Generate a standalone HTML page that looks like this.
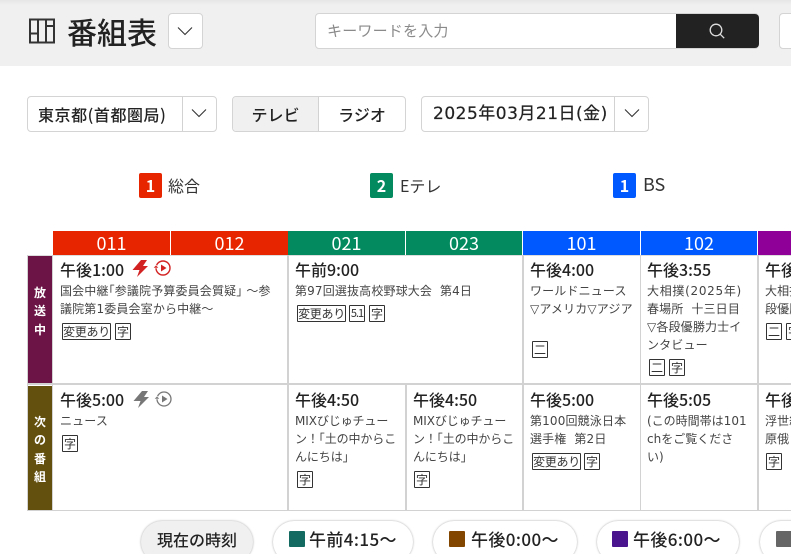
<!DOCTYPE html>
<html lang="ja"><head><meta charset="utf-8"><title>番組表</title>
<style>
*{box-sizing:border-box;margin:0;padding:0}
html,body{width:791px;height:554px;overflow:hidden;background:#fff}
body{position:relative;font-family:"Noto Sans CJK JP","Liberation Sans",sans-serif;color:#222}
.a{position:absolute;white-space:nowrap}
.box{position:absolute;background:#fff;border:1px solid #d4d4d4;border-radius:4px}
.ln{position:absolute;background:#d2d2d2}
.hd{position:absolute;top:231px;height:24px;color:#fff;font-size:18px;line-height:24px;text-align:center}
.t{position:absolute;white-space:nowrap;font-size:16px;font-weight:500;line-height:20px;color:#222}
.d{position:absolute;white-space:nowrap;font-family:"DejaVu Sans","Noto Sans CJK JP",sans-serif;font-size:12px;line-height:18px;color:#444;letter-spacing:.15px}
.g{position:absolute;height:17px;border:1px solid #333;border-radius:1px;font-family:"Noto Sans CJK JP",sans-serif;font-size:12px;line-height:15px;text-align:center;color:#333;background:#fff;white-space:nowrap;overflow:hidden}
.w{width:16px}.l{width:49px;letter-spacing:-.3px}
.side{position:absolute;left:28px;width:24px;color:#fff;font-size:12px;font-weight:700;text-align:center;line-height:18.300px}
.pill{position:absolute;top:521px;height:42px;border-radius:21px;background:#fff;box-shadow:0 0 2px rgba(0,0,0,.35)}
.sq{position:absolute;top:531px;width:16px;height:16px;border-radius:1px}
.pt{position:absolute;top:529px;font-size:17px;line-height:20px;font-weight:500;white-space:nowrap;color:#222;letter-spacing:.4px}
.b{position:absolute;top:173px;width:23px;height:25px;border-radius:2px;color:#fff;font-size:16px;font-weight:700;line-height:25px;text-align:center}
.c{position:absolute;top:174px;font-size:16px;line-height:22px;color:#333}
</style></head><body>
<div class="a" style="left:0;top:0;width:791px;height:66px;background:linear-gradient(#e6e6e6,#f0f0f0 5px)"></div>
<svg class="a" style="left:28px;top:18px" width="28" height="26" viewBox="0 0 28 26" fill="none" stroke="#333" stroke-width="2"><rect x="2" y="1.500" width="24" height="23"/><path d="M10 1.500v23M18 1.500v23M2 15.500h8M18 8h8"/></svg>
<div class="a" style="left:67px;top:10px;font-size:30px;font-weight:500;line-height:42px;color:#222">番組表</div>
<div class="box" style="left:168px;top:13px;width:35px;height:36px"></div>
<svg class="a" style="left:176px;top:26px" width="18" height="10" fill="none" stroke="#333" stroke-width="1.100"><path d="M2 1.500l7 7 7-7"/></svg>
<div class="box" style="left:315px;top:13px;width:444px;height:36px"></div>
<div class="a" style="left:327px;top:21px;font-size:15px;line-height:20px;color:#8a8a8a;letter-spacing:.2px">キーワードを入力</div>
<div class="a" style="left:676px;top:14px;width:83px;height:34px;background:#222;border-radius:0 4px 4px 0"></div>
<svg class="a" style="left:708px;top:22px" width="18" height="18" fill="none" stroke="#ddd" stroke-width="1.300"><circle cx="8" cy="8" r="5.800"/><path d="M12.200 12.200l4 4"/></svg>
<div class="box" style="left:779px;top:13px;width:30px;height:36px"></div>

<div class="box" style="left:27px;top:96px;width:190px;height:36px"></div>
<div class="ln" style="left:182px;top:97px;width:1px;height:34px"></div>
<div class="a" style="left:38px;top:103px;font-size:16px;font-weight:500;line-height:22px;letter-spacing:.55px">東京都(首都圏局)</div>
<svg class="a" style="left:190px;top:108px" width="18" height="10" fill="none" stroke="#333" stroke-width="1.100"><path d="M2 1.500l7 7 7-7"/></svg>
<div class="box" style="left:232px;top:96px;width:174px;height:36px"></div>
<div class="a" style="left:233px;top:97px;width:85px;height:34px;background:#f0f0f0;border-radius:3px 0 0 3px"></div>
<div class="ln" style="left:318px;top:97px;width:1px;height:34px"></div>
<div class="a" style="left:233px;top:103px;width:85px;text-align:center;font-size:16px;font-weight:500;line-height:22px">テレビ</div>
<div class="a" style="left:319px;top:103px;width:86px;text-align:center;font-size:16px;font-weight:500;line-height:22px">ラジオ</div>
<div class="box" style="left:421px;top:96px;width:228px;height:36px"></div>
<div class="ln" style="left:614px;top:97px;width:1px;height:34px"></div>
<div class="a" style="left:433px;top:103px;font-family:'DejaVu Sans','Noto Sans CJK JP',sans-serif;font-size:17px;font-weight:400;line-height:22px;letter-spacing:.5px;-webkit-text-stroke:.2px #222">2025年03月21日(金)</div>
<svg class="a" style="left:623px;top:108px" width="18" height="10" fill="none" stroke="#333" stroke-width="1.100"><path d="M2 1.500l7 7 7-7"/></svg>

<div class="b" style="left:139px;background:#e72600">1</div><div class="c" style="left:168px">総合</div>
<div class="b" style="left:370px;background:#048a5f">2</div><div class="c" style="left:400px">Eテレ</div>
<div class="b" style="left:613px;background:#0059ff">1</div><div class="c" style="left:643px;font-size:18px;top:173px">BS</div>

<div class="hd" style="left:53px;width:117px;background:#e72600">011</div>
<div class="hd" style="left:171px;width:117px;background:#e72600">012</div>
<div class="hd" style="left:288px;width:117px;background:#048a5f">021</div>
<div class="hd" style="left:406px;width:116px;background:#048a5f">023</div>
<div class="hd" style="left:523px;width:117px;background:#0059ff">101</div>
<div class="hd" style="left:641px;width:116px;background:#0059ff">102</div>
<div class="hd" style="left:758px;width:33px;background:#8f0099"></div>

<div class="side" style="top:256px;height:127px;background:#6b1445;padding-top:28px">放<br>送<br>中</div>
<div class="side" style="top:386px;height:124px;background:#63500f;padding-top:27px">次<br>の<br>番<br>組</div>

<div class="ln" style="left:27px;top:255px;width:764px;height:1px;background:#ddd"></div>
<div class="ln" style="left:27px;top:383px;width:764px;height:1.500px"></div>
<div class="ln" style="left:27px;top:510px;width:764px;height:1px"></div>
<div class="ln" style="left:27px;top:255px;width:1px;height:256px"></div>
<div class="ln" style="left:52px;top:255px;width:1px;height:256px"></div>
<div class="ln" style="left:287px;top:255px;width:1.500px;height:256px"></div>
<div class="ln" style="left:405px;top:384px;width:1.500px;height:127px"></div>
<div class="ln" style="left:522px;top:255px;width:1.500px;height:256px"></div>
<div class="ln" style="left:639.500px;top:255px;width:1.500px;height:256px"></div>
<div class="ln" style="left:757px;top:255px;width:1.500px;height:256px"></div>

<div class="t" style="left:60px;top:259px">午後1:00</div>
<svg class="a" style="left:131px;top:258px" width="42" height="22" viewBox="0 0 42 22"><path d="M10 2H16L12 8H17L6 19L8.500 12H1.500Z" fill="#d32222"/><circle cx="32" cy="10" r="7" fill="none" stroke="#d32222" stroke-width="1.400"/><path d="M30 6.500v7l5.500-3.500z" fill="#d32222"/><path d="M22 10l3-3 3 3z" fill="#d32222" stroke="#fff" stroke-width=".6"/></svg>
<div class="d" style="left:60px;top:282px">国会中継｢参議院予算委員会質疑｣ ～参<br>議院第1委員会室から中継～</div>
<div class="g l" style="left:62px;top:323px">変更あり</div><div class="g w" style="left:115px;top:323px">字</div>

<div class="t" style="left:295px;top:259px">午前9:00</div>
<div class="d" style="left:295px;top:282px">第97回選抜高校野球大会&nbsp; 第4日</div>
<div class="g l" style="left:297px;top:305px">変更あり</div><div class="g w" style="left:349px;top:305px;letter-spacing:-1px;font-size:11px">5.1</div><div class="g w" style="left:369px;top:305px">字</div>

<div class="t" style="left:530px;top:259px">午後4:00</div>
<div class="d" style="left:530px;top:282px">ワールドニュース<br>▽アメリカ▽アジア</div>
<div class="g w" style="left:532px;top:341px">二</div>

<div class="t" style="left:647px;top:259px">午後3:55</div>
<div class="d" style="left:647px;top:282px"><span style="letter-spacing:.7px">大相撲(2025年)</span><br>春場所&nbsp; 十三日目<br>▽各段優勝力士イ<br>ンタビュー</div>
<div class="g w" style="left:649px;top:359px">二</div><div class="g w" style="left:669px;top:359px">字</div>

<div class="t" style="left:765px;top:259px">午後</div>
<div class="d" style="left:765px;top:282px">大相撲<br>段優勝</div>
<div class="g w" style="left:766px;top:323px">二</div><div class="g w" style="left:786px;top:323px">字</div>

<div class="t" style="left:60px;top:389px">午後5:00</div>
<svg class="a" style="left:132px;top:389px" width="42" height="22" viewBox="0 0 42 22"><path d="M10 2H16L12 8H17L6 19L8.500 12H1.500Z" fill="#777"/><circle cx="32" cy="10" r="7" fill="none" stroke="#777" stroke-width="1.300"/><path d="M30 6.500v7l5.500-3.500z" fill="#777"/><path d="M22 10l3-3 3 3z" fill="#777" stroke="#fff" stroke-width=".6"/></svg>
<div class="d" style="left:60px;top:412px">ニュース</div>
<div class="g w" style="left:62px;top:435px">字</div>

<div class="t" style="left:295px;top:389px">午後4:50</div>
<div class="d" style="left:295px;top:412px;letter-spacing:-.1px">MIXびじゅチュー<br>ン！｢土の中からこ<br>んにちは｣</div>
<div class="g w" style="left:297px;top:471px">字</div>
<div class="t" style="left:413px;top:389px">午後4:50</div>
<div class="d" style="left:413px;top:412px;letter-spacing:-.1px">MIXびじゅチュー<br>ン！｢土の中からこ<br>んにちは｣</div>
<div class="g w" style="left:414px;top:471px">字</div>

<div class="t" style="left:530px;top:389px">午後5:00</div>
<div class="d" style="left:530px;top:412px">第100回競泳日本<br>選手権&nbsp; 第2日</div>
<div class="g l" style="left:532px;top:453px">変更あり</div><div class="g w" style="left:584px;top:453px">字</div>

<div class="t" style="left:647px;top:389px">午後5:05</div>
<div class="d" style="left:647px;top:412px;letter-spacing:0">(この時間帯は101<br>chをご覧くださ<br>い)</div>

<div class="t" style="left:765px;top:389px">午後</div>
<div class="d" style="left:765px;top:412px">浮世絵<br>原俄</div>
<div class="g w" style="left:766px;top:453px">字</div>

<div class="pill" style="left:141px;width:112px;background:#f0f0f0"></div>
<div class="a" style="left:141px;top:529px;width:112px;text-align:center;font-size:16px;font-weight:500;line-height:20px">現在の時刻</div>
<div class="pill" style="left:273px;width:140px"></div><div class="sq" style="left:289px;background:#136a60"></div><div class="pt" style="left:309px">午前4:15～</div>
<div class="pill" style="left:433px;width:144px"></div><div class="sq" style="left:449px;background:#834600"></div><div class="pt" style="left:471px">午後0:00～</div>
<div class="pill" style="left:597px;width:142px"></div><div class="sq" style="left:612px;background:#4b148f"></div><div class="pt" style="left:633px">午後6:00～</div>
<div class="pill" style="left:760px;width:100px"></div><div class="sq" style="left:776px;background:#666"></div>
</body></html>
